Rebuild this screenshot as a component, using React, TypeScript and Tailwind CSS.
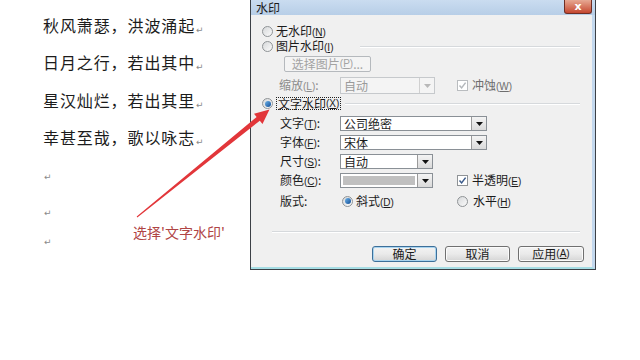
import type { ReactNode } from 'react';

const poem = ['秋风萧瑟，洪波涌起', '日月之行，若出其中', '星汉灿烂，若出其里', '幸甚至哉，歌以咏志'];

function Pil() {
  return <span className="ml-[1px] self-end pb-[9px] font-['DejaVu_Sans',sans-serif] text-[9px] leading-none tracking-normal text-[#8a8a8a]">↵</span>;
}

function Mn({ k }: { k: string }) {
  return (
    <span className="font-['Liberation_Sans',sans-serif] text-[10px]">
      (<span className="underline">{k}</span>)
    </span>
  );
}

function Radio({ checked }: { checked?: boolean }) {
  return (
    <span className="flex h-[11px] w-[11px] shrink-0 items-center justify-center rounded-full border border-[#8f9396] bg-linear-to-br from-[#d6d8da] to-[#fbfbfb]">
      {checked && <span className="h-[6px] w-[6px] rounded-full bg-linear-to-br from-[#6fb4ea] to-[#0d4c95]" />}
    </span>
  );
}

function Check({ dim }: { dim?: boolean }) {
  return (
    <span className={`flex h-[11px] w-[11px] shrink-0 items-center justify-center border bg-white ${dim ? 'border-[#b9bcbf]' : 'border-[#8f9396]'}`}>
      <svg width="9" height="9" viewBox="0 0 9 9">
        <path d="M1.5 4.6 L3.6 6.9 L7.6 1.6" fill="none" stroke={dim ? '#b4b8bc' : '#3a5a8a'} strokeWidth="1.5" />
      </svg>
    </span>
  );
}

function Arrow({ dim }: { dim?: boolean }) {
  return (
    <span className={`flex h-full w-[15px] shrink-0 items-center justify-center border-l ${dim ? 'border-[#d0d0d0] bg-[#f4f4f4]' : 'border-[#9a9a9a] bg-linear-to-b from-[#f4f4f4] to-[#dadada]'}`}>
      <svg width="7" height="4" viewBox="0 0 7 4">
        <path d="M0 0 H7 L3.5 4 Z" fill={dim ? '#b8b8b8' : '#111'} />
      </svg>
    </span>
  );
}

function Combo({ w, value, dim }: { w: string; value?: string; dim?: boolean }) {
  return (
    <div className={`flex h-full ${w} items-stretch border ${dim ? 'border-[#c6c9cc] bg-[#f4f4f4] text-[#9a9a9a]' : 'border-[#8a9096] bg-white'}`}>
      <span className="flex flex-1 items-center pl-[3px]">{value}</span>
      <Arrow dim={dim} />
    </div>
  );
}

function Btn({ children, w, def }: { children: ReactNode; w: string; def?: boolean }) {
  return (
    <div
      className={`flex h-[16px] ${w} items-center justify-center rounded-[3px] border bg-linear-to-b from-[#f3f3f3] via-[#eaeaea] to-[#d5d5d5] ${
        def ? 'border-[#3d6f99] shadow-[inset_0_0_0_1px_#a9d4ef]' : 'border-[#707070] shadow-[inset_0_0_0_1px_#fbfbfb]'
      }`}
    >
      {children}
    </div>
  );
}

function Label({ children }: { children: ReactNode }) {
  return <span className="w-[60px] shrink-0">{children}</span>;
}

export default function App() {
  return (
    <div className="relative flex h-[360px] w-[640px] overflow-hidden bg-white font-['Noto_Sans_CJK_SC',sans-serif] leading-none">
      <div className="w-[250px] shrink-0 pl-[43px] pt-[6px] text-[16px] tracking-[0.9px] text-[#1c1c1c]">
        {poem.map((l) => (
          <div key={l} className="flex h-[37.5px] items-center">
            {l}
            <Pil />
          </div>
        ))}
        <div className="mt-[14px] flex h-[14px] items-center pl-[1px] font-['DejaVu_Sans',sans-serif] text-[9px] text-[#8a8a8a]">↵</div>
        <div className="mt-[22px] flex h-[14px] items-center pl-[1px] font-['DejaVu_Sans',sans-serif] text-[9px] text-[#8a8a8a]">↵</div>
        <div className="mt-[15px] flex h-[14px] items-center pl-[1px] font-['DejaVu_Sans',sans-serif] text-[9px] text-[#8a8a8a]">↵</div>
      </div>

      <div className="flex h-[270px] w-[346px] shrink-0 flex-col border-x border-b border-[#3c4046] bg-[#c3d8ee] text-[12px] text-[#1b1b1b]">
        <div className="flex h-[15px] items-start justify-between bg-linear-to-b from-[#cadcf0] to-[#b7cee7] pl-[5px] pr-[3px]">
          <span className="pt-[2px]">水印</span>
          <span className="flex h-[14px] w-[28px] items-center justify-center rounded-b-[3px] border border-t-0 border-[#6e2e24] bg-linear-to-b from-[#e6a893] to-[#c4452e] font-['DejaVu_Sans',sans-serif] text-[11px] font-bold text-white">
            x
          </span>
        </div>

        <div className="flex flex-1 flex-col border-r-[3px] border-b-2 border-r-[#c3d8ee] border-b-[#a6dde4] bg-[#f0f0f0] pt-[9px]">
          <div className="flex h-[15px] items-center gap-[3px] pl-[11px]">
            <Radio />
            <span>
              无水印<Mn k="N" />
            </span>
          </div>
          <div className="flex h-[15px] items-center gap-[3px] pl-[11px]">
            <Radio />
            <span>
              图片水印<Mn k="I" />
            </span>
            <span className="mr-[12px] ml-auto h-[2px] w-[220px] border-t border-b border-t-[#d6d9dc] border-b-white" />
          </div>
          <div className="mt-[2px] flex h-[16px] pl-[33px]">
            <div className="flex h-full w-[87px] items-center justify-center rounded-[2px] border border-[#b5b9bd] bg-[#f4f4f4] text-[#a3a3a3]">
              选择图片<Mn k="P" />...
            </div>
          </div>
          <div className="mt-[5px] flex h-[17px] items-center pl-[28px]">
            <span className="w-[61px] shrink-0 text-[#8c8c8c]">
              缩放<Mn k="L" />:
            </span>
            <Combo w="w-[95px]" value="自动" dim />
            <span className="ml-[22px]">
              <Check dim />
            </span>
            <span className="ml-[4px] text-[#6e6e6e]">
              冲蚀<Mn k="W" />
            </span>
          </div>
          <div className="mt-[3px] flex h-[13px] items-center pl-[11px]">
            <Radio checked />
            <span className="ml-[3px] flex h-full items-center border border-dotted border-[#222] px-[1px]">
              文字水印<Mn k="X" />
            </span>
            <span className="mr-[12px] ml-auto h-[2px] w-[235px] border-t border-b border-t-[#d6d9dc] border-b-white" />
          </div>
          <div className="mt-[6px] flex h-[15px] items-center pl-[29px]">
            <Label>
              文字<Mn k="T" />:
            </Label>
            <Combo w="w-[147px]" value="公司绝密" />
          </div>
          <div className="mt-[4px] flex h-[15px] items-center pl-[29px]">
            <Label>
              字体<Mn k="F" />:
            </Label>
            <Combo w="w-[147px]" value="宋体" />
          </div>
          <div className="mt-[4px] flex h-[15px] items-center pl-[29px]">
            <Label>
              尺寸<Mn k="S" />:
            </Label>
            <Combo w="w-[93px]" value="自动" />
          </div>
          <div className="mt-[4px] flex h-[15px] items-center pl-[29px]">
            <Label>
              颜色<Mn k="C" />:
            </Label>
            <div className="flex h-full w-[93px] items-stretch border border-[#8a9096] bg-white">
              <span className="m-[2px] flex-1 bg-[#c0c0c0]" />
              <Arrow />
            </div>
            <span className="ml-[24px]">
              <Check />
            </span>
            <span className="ml-[4px]">
              半透明<Mn k="E" />
            </span>
          </div>
          <div className="mt-[6px] flex h-[14px] items-center pl-[29px]">
            <Label>版式:</Label>
            <div className="flex w-[117px] items-center pl-[2px]">
              <Radio checked />
              <span className="ml-[3px]">
                斜式<Mn k="D" />
              </span>
            </div>
            <Radio />
            <span className="ml-[5px]">
              水平<Mn k="H" />
            </span>
          </div>
          <div className="mt-[23px] ml-[21px] h-[2px] w-[308px] border-t border-b border-t-[#d6d9dc] border-b-white" />
          <div className="mt-[13px] flex gap-[8px] pl-[121px]">
            <Btn w="w-[65px]" def>
              确定
            </Btn>
            <Btn w="w-[65px]">取消</Btn>
            <Btn w="w-[66px]">
              应用<Mn k="A" />
            </Btn>
          </div>
        </div>
      </div>

      <svg className="pointer-events-none absolute inset-0" width="640" height="360" viewBox="0 0 640 360">
        <polygon
          points="137.3,217.4 259.8,120.8 262.5,124 269.5,109.5 254,113.8 256.6,117 136.7,216.6"
          fill="#e2363a"
        />
      </svg>
      <div className="absolute top-[225px] left-[133px] text-[14px] text-[#b04545]">选择'文字水印'</div>
    </div>
  );
}
